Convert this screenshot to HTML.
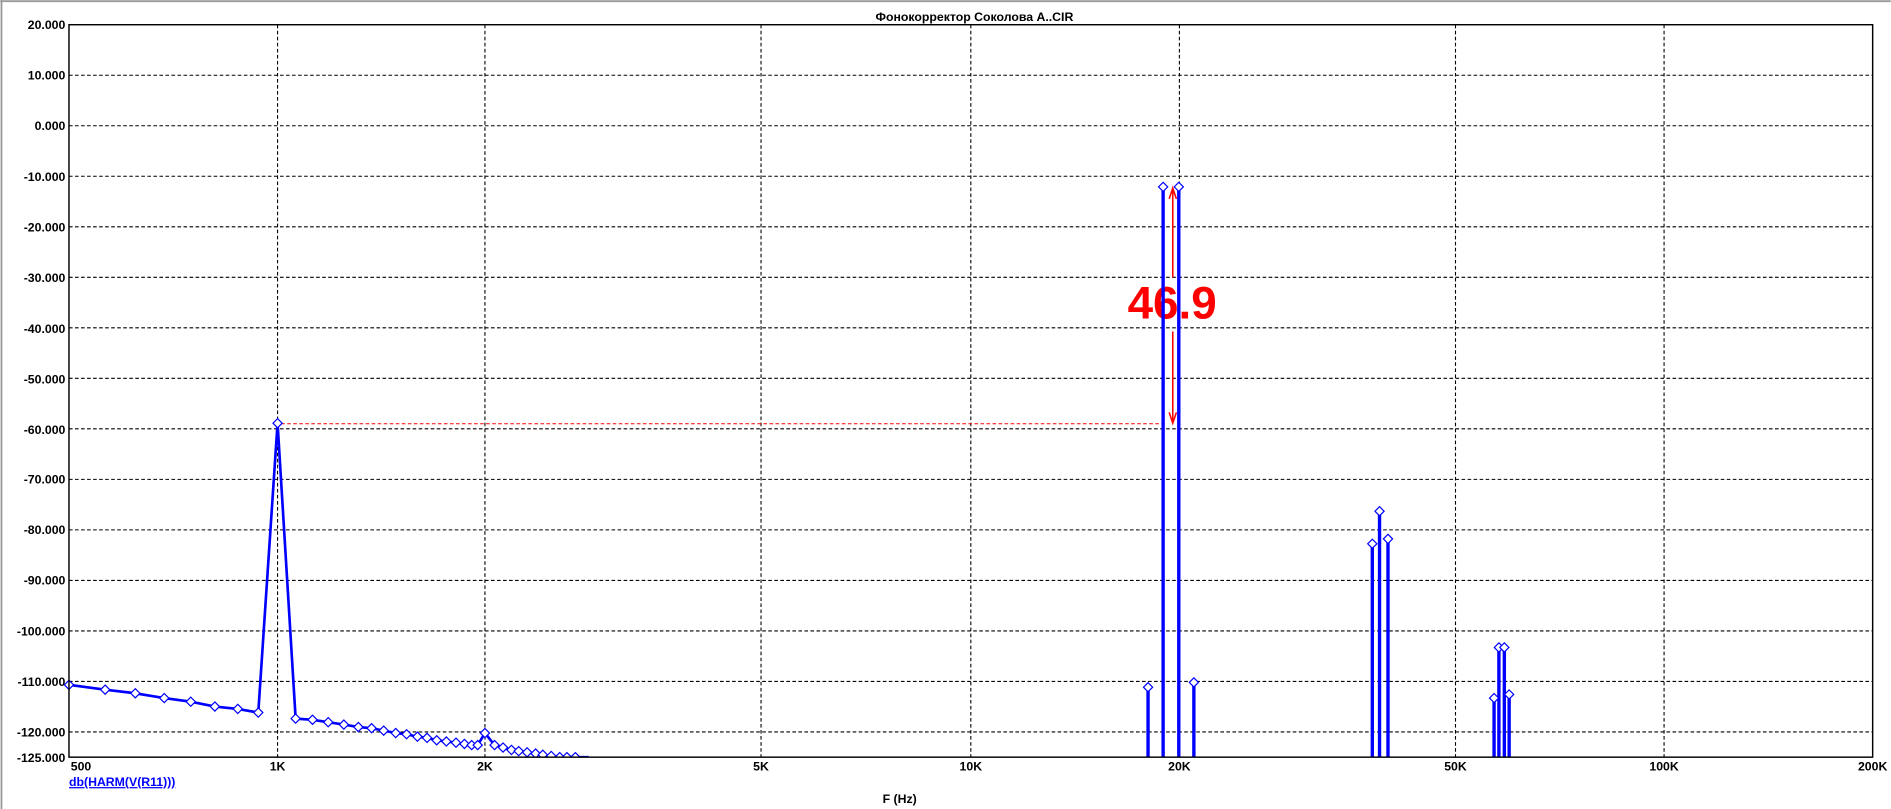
<!DOCTYPE html>
<html><head><meta charset="utf-8"><style>
html,body{margin:0;padding:0;background:#fff;overflow:hidden}
svg{display:block}
text{font-family:"Liberation Sans",Arial,sans-serif;font-weight:bold;font-size:10.2px;fill:#000}
</style></head><body>
<svg width="1891" height="809" viewBox="0 0 1568 671" xmlns="http://www.w3.org/2000/svg">
<defs><clipPath id="pc"><rect x="50" y="10" width="1510" height="618"/></clipPath></defs>
<rect x="0" y="0" width="1568" height="671" fill="#fff"/>
<line x1="0" y1="1" x2="1568" y2="1" stroke="#999" stroke-width="1.5"/>
<line x1="1" y1="0" x2="1" y2="671" stroke="#999" stroke-width="1.5"/>
<text x="808" y="17.5" text-anchor="middle" font-size="10">Фонокорректор Соколова A..CIR</text>
<g stroke="#000" stroke-width="0.9" stroke-dasharray="3,2">
<line x1="57" y1="62.4" x2="1553" y2="62.4"/>
<line x1="57" y1="104.3" x2="1553" y2="104.3"/>
<line x1="57" y1="146.2" x2="1553" y2="146.2"/>
<line x1="57" y1="188.1" x2="1553" y2="188.1"/>
<line x1="57" y1="230" x2="1553" y2="230"/>
<line x1="57" y1="271.9" x2="1553" y2="271.9"/>
<line x1="57" y1="313.8" x2="1553" y2="313.8"/>
<line x1="57" y1="355.7" x2="1553" y2="355.7"/>
<line x1="57" y1="397.6" x2="1553" y2="397.6"/>
<line x1="57" y1="439.5" x2="1553" y2="439.5"/>
<line x1="57" y1="481.4" x2="1553" y2="481.4"/>
<line x1="57" y1="523.3" x2="1553" y2="523.3"/>
<line x1="57" y1="565.2" x2="1553" y2="565.2"/>
<line x1="57" y1="607.1" x2="1553" y2="607.1"/>
<line x1="230" y1="20.5" x2="230" y2="628"/>
<line x1="402" y1="20.5" x2="402" y2="628"/>
<line x1="631" y1="20.5" x2="631" y2="628"/>
<line x1="805" y1="20.5" x2="805" y2="628"/>
<line x1="978" y1="20.5" x2="978" y2="628"/>
<line x1="1207" y1="20.5" x2="1207" y2="628"/>
<line x1="1380" y1="20.5" x2="1380" y2="628"/>
</g>
<g text-anchor="end">
<text x="54" y="24">20.000</text><text x="54" y="66">10.000</text><text x="54" y="108">0.000</text>
<text x="54" y="150">-10.000</text><text x="54" y="192">-20.000</text><text x="54" y="234">-30.000</text>
<text x="54" y="276">-40.000</text><text x="54" y="318">-50.000</text><text x="54" y="360">-60.000</text>
<text x="54" y="401">-70.000</text><text x="54" y="443">-80.000</text><text x="54" y="485">-90.000</text>
<text x="54" y="527">-100.000</text><text x="54" y="569">-110.000</text><text x="54" y="611">-120.000</text>
<text x="54" y="632">-125.000</text>
</g>
<g text-anchor="middle">
<text x="67" y="639">500</text><text x="230" y="639">1K</text><text x="402" y="639">2K</text>
<text x="631" y="639">5K</text><text x="805" y="639">10K</text><text x="978" y="639">20K</text>
<text x="1207" y="639">50K</text><text x="1380" y="639">100K</text><text x="1553" y="639">200K</text>
<text x="746" y="666">F (Hz)</text>
</g>
<text x="57" y="652" style="fill:#0000ff;text-decoration:underline">db(HARM(V(R11)))</text>
<line x1="233" y1="351.5" x2="968" y2="351.5" stroke="#f00" stroke-width="0.8" stroke-dasharray="3,2"/>
<g stroke="#f00" stroke-width="1.3" fill="none">
<line x1="972.5" y1="157" x2="972.5" y2="230"/>
<line x1="972.5" y1="275" x2="972.5" y2="350"/>
<polyline points="969.5,165 972.5,156 975.5,165"/>
<polyline points="969.5,342 972.5,351 975.5,342"/>
</g>
<text x="972" y="264" text-anchor="middle" style="fill:#f00;font-size:38px">46.9</text>
<g clip-path="url(#pc)">
<g stroke="#00f" stroke-width="2.8">
<line x1="952" y1="570" x2="952" y2="628"/>
<line x1="964.5" y1="155" x2="964.5" y2="628"/>
<line x1="977.5" y1="155" x2="977.5" y2="628"/>
<line x1="990" y1="566" x2="990" y2="628"/>
<line x1="1138" y1="451" x2="1138" y2="628"/>
<line x1="1144" y1="424" x2="1144" y2="628"/>
<line x1="1151" y1="447" x2="1151" y2="628"/>
<line x1="1239" y1="579" x2="1239" y2="628"/>
<line x1="1243" y1="537" x2="1243" y2="628"/>
<line x1="1247.5" y1="537" x2="1247.5" y2="628"/>
<line x1="1251.5" y1="576" x2="1251.5" y2="628"/>
</g>
<polyline fill="none" stroke="#00f" stroke-width="2.2" points="57,568 87,572 112,575 136,579 158,582 178,586 197,588 214,591 230,351 245,596 259,597 272,599 285,601 297,603 308,604 318,606 328,608 337,609 346,611 354,612 362,614 370,615 378,616 385,617 391,618 396,618 402,608 410,618 417,620 424,622 430,623 437,624 444,625 450,626 457,627 464,628 488,628"/>
<g fill="#fff" stroke="#00f" stroke-width="1">
<path id="d" d="M0,-3.8 L3.8,0 0,3.8 -3.8,0Z" transform="translate(57,568)"/>
<use href="#d" x="30" y="4"/><use href="#d" x="55" y="7"/><use href="#d" x="79" y="11"/><use href="#d" x="101" y="14"/>
<use href="#d" x="121" y="18"/><use href="#d" x="140" y="20"/><use href="#d" x="157" y="23"/><use href="#d" x="173" y="-217"/>
<use href="#d" x="188" y="28"/><use href="#d" x="202" y="29"/><use href="#d" x="215" y="31"/><use href="#d" x="228" y="33"/>
<use href="#d" x="240" y="35"/><use href="#d" x="251" y="36"/><use href="#d" x="261" y="38"/><use href="#d" x="271" y="40"/>
<use href="#d" x="280" y="41"/><use href="#d" x="289" y="43"/><use href="#d" x="297" y="44"/><use href="#d" x="305" y="46"/>
<use href="#d" x="313" y="47"/><use href="#d" x="321" y="48"/><use href="#d" x="328" y="49"/><use href="#d" x="334" y="50"/>
<use href="#d" x="339" y="50"/><use href="#d" x="345" y="40"/><use href="#d" x="353" y="50"/><use href="#d" x="360" y="52"/>
<use href="#d" x="367" y="54"/><use href="#d" x="373" y="55"/><use href="#d" x="380" y="56"/><use href="#d" x="387" y="57"/>
<use href="#d" x="393" y="58"/><use href="#d" x="400" y="59"/><use href="#d" x="407" y="60"/><use href="#d" x="413" y="60"/><use href="#d" x="420" y="60"/>
<use href="#d" x="895" y="2"/><use href="#d" x="907.5" y="-413"/><use href="#d" x="920.5" y="-413"/><use href="#d" x="933" y="-2"/>
<use href="#d" x="1081" y="-117"/><use href="#d" x="1087" y="-144"/><use href="#d" x="1094" y="-121"/>
<use href="#d" x="1182" y="11"/><use href="#d" x="1186" y="-31"/><use href="#d" x="1190.5" y="-31"/><use href="#d" x="1194.5" y="8"/>
</g>
</g>
<rect x="57" y="20.5" width="1496" height="607.5" fill="none" stroke="#000" stroke-width="1.2"/>
</svg>
</body></html>
